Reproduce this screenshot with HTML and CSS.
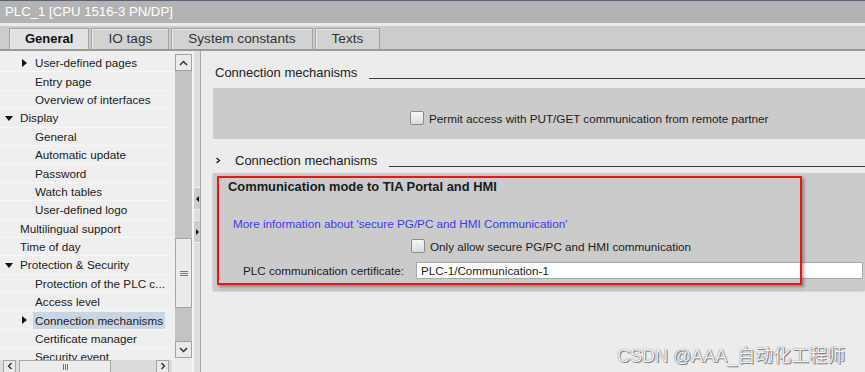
FILE: index.html
```html
<!DOCTYPE html>
<html lang="en">
<head>
    <meta charset="UTF-8">
    <meta name="viewport" content="width=device-width, initial-scale=1.0">
    <title>PLC_1 Properties</title>
    <link rel="stylesheet" href="styles.css">
</head>
<body>
    <div class="window">
        <div class="titlebar">PLC_1 [CPU 1516-3 PN/DP]</div>

        <div class="tabbar">
            <div class="tab active">General</div>
            <div class="tab">IO tags</div>
            <div class="tab">System constants</div>
            <div class="tab">Texts</div>
        </div>

        <div class="main">
            <div class="tree-col">
                <ul class="tree">
                    <li class="row l2"><span class="twisty closed"></span><span class="label">User-defined pages</span></li>
                    <li class="row l2"><span class="label">Entry page</span></li>
                    <li class="row l2"><span class="label">Overview of interfaces</span></li>
                    <li class="row l1"><span class="twisty open"></span><span class="label">Display</span></li>
                    <li class="row l2"><span class="label">General</span></li>
                    <li class="row l2"><span class="label">Automatic update</span></li>
                    <li class="row l2"><span class="label">Password</span></li>
                    <li class="row l2"><span class="label">Watch tables</span></li>
                    <li class="row l2"><span class="label">User-defined logo</span></li>
                    <li class="row l1"><span class="label">Multilingual support</span></li>
                    <li class="row l1"><span class="label">Time of day</span></li>
                    <li class="row l1"><span class="twisty open"></span><span class="label">Protection &amp; Security</span></li>
                    <li class="row l2"><span class="label">Protection of the PLC c...</span></li>
                    <li class="row l2"><span class="label">Access level</span></li>
                    <li class="row l2 selected"><span class="twisty closed"></span><span class="label">Connection mechanisms</span></li>
                    <li class="row l2"><span class="label">Certificate manager</span></li>
                    <li class="row l2"><span class="label">Security event</span></li>
                </ul>
                <div class="hscroll">
                    <div class="sbtn">
                        <svg width="8" height="8" viewBox="0 0 8 8"><polyline points="5.5,1 2.5,4 5.5,7" fill="none" stroke="#333" stroke-width="1.4"/></svg>
                    </div>
                    <div class="hthumb"><span class="grip-v"></span></div>
                    <div class="hspace"></div>
                    <div class="sbtn">
                        <svg width="8" height="8" viewBox="0 0 8 8"><polyline points="2.5,1 5.5,4 2.5,7" fill="none" stroke="#333" stroke-width="1.4"/></svg>
                    </div>
                </div>
            </div>

            <div class="vscroll">
                <div class="sbtn">
                    <svg width="9" height="8" viewBox="0 0 9 8"><polyline points="1,6 4.5,2.5 8,6" fill="none" stroke="#333" stroke-width="1.5"/></svg>
                </div>
                <div class="track-top"></div>
                <div class="vthumb"><span class="grip-h"></span></div>
                <div class="track-bottom"></div>
                <div class="sbtn">
                    <svg width="9" height="8" viewBox="0 0 9 8"><polyline points="1,2 4.5,5.5 8,2" fill="none" stroke="#333" stroke-width="1.5"/></svg>
                </div>
            </div>

            <div class="splitter">
                <div class="split-btn"><span class="arrow-left"></span></div>
                <div class="split-btn"><span class="arrow-right"></span></div>
            </div>

            <div class="content">
                <div class="section-head">
                    <span>Connection mechanisms</span>
                    <span class="rule"></span>
                </div>
                <div class="panel panel-put">
                    <label class="check-row">
                        <span class="checkbox"></span>
                        <span>Permit access with PUT/GET communication from remote partner</span>
                    </label>
                </div>

                <div class="section-head sub">
                    <span class="chev">
                        <svg width="6" height="7" viewBox="0 0 6 7"><polyline points="1.5,1 4.5,3.5 1.5,6" fill="none" stroke="#222" stroke-width="1.4"/></svg>
                    </span>
                    <span>Connection mechanisms</span>
                    <span class="rule"></span>
                </div>
                <div class="panel panel-mode">
                    <div class="panel-title">Communication mode to TIA Portal and HMI</div>
                    <div class="info-link">More information about 'secure PG/PC and HMI Communication'</div>
                    <label class="check-row secure">
                        <span class="checkbox"></span>
                        <span>Only allow secure PG/PC and HMI communication</span>
                    </label>
                    <div class="cert-row">
                        <span class="cert-label">PLC communication certificate:</span>
                        <div class="cert-field">PLC-1/Communication-1</div>
                    </div>
                    <div class="highlight"></div>
                </div>
            </div>
        </div>

        <div class="watermark">CSDN @AAA_自动化工程师</div>
    </div>
</body>
</html>
```

FILE: styles.css
```css
:root {
    --panel: #cbcbcb;
    --content: #ececec;
    --text: #1c1c1c;
    --border: #9c9c9c;
}

* {
    box-sizing: border-box;
}

body {
    margin: 0;
    font-family: "Liberation Sans", Arial, sans-serif;
    font-size: 11.7px;
    color: var(--text);
    background-color: var(--content);
}

.window {
    position: relative;
    width: 865px;
    height: 372px;
    overflow: hidden;
    display: flex;
    flex-direction: column;
}

.titlebar {
    height: 23px;
    border-top: 1px solid #5b6171;
    background-color: #b3b3b3;
    color: #ffffff;
    font-size: 13.2px;
    line-height: 21px;
    padding-left: 5px;
}

.tabbar {
    height: 28px;
    border-top: 3px solid #ebebeb;
    border-bottom: 2px solid #999999;
    background-color: #cccccc;
    display: flex;
    gap: 2px;
    padding: 2px 0 0 9px;
}

.tab {
    height: 21px;
    padding: 0 16px;
    border: 1px solid #a2a2a2;
    border-bottom: none;
    box-shadow: inset 1px 1px 0 #e8e8e8;
    background-color: #d2d2d2;
    font-size: 13.6px;
    line-height: 20px;
    color: #333333;
    text-align: center;
}

.tab.active {
    background-color: #e2e2e2;
    font-weight: bold;
    font-size: 13px;
    color: #111111;
    padding: 0 15px;
}

.main {
    flex: 1;
    display: flex;
    min-height: 0;
}

/* left navigation tree */
.tree-col {
    width: 175px;
    display: flex;
    flex-direction: column;
    background-color: #efefef;
}

.tree {
    flex: 1;
    list-style: none;
    margin: 0;
    padding: 3px 0 0 0;
    overflow: hidden;
}

.row {
    height: 18.4px;
    display: flex;
    align-items: center;
    border-bottom: 1px solid #f7f7f7;
    white-space: nowrap;
    margin-right: 3px;
}

.row.l1 {
    padding-left: 20px;
}

.row.l2 {
    padding-left: 35px;
}

.label {
    height: 17px;
    line-height: 17px;
    padding: 0 2px;
    margin-left: -2px;
}

.row.selected .label {
    background-color: #c9d5e1;
}

.twisty {
    width: 0;
    height: 0;
    margin-left: -13px;
    margin-right: 13px;
    position: relative;
}

.twisty.closed::before,
.twisty.open::before {
    content: "";
    position: absolute;
    top: -4px;
}

.twisty.closed::before {
    left: 0;
    border-top: 4px solid transparent;
    border-bottom: 4px solid transparent;
    border-left: 5px solid #111111;
}

.row.l1 .twisty {
    margin-left: -15px;
    margin-right: 15px;
}

.twisty.open::before {
    left: 0;
    top: -2px;
    border-left: 4px solid transparent;
    border-right: 4px solid transparent;
    border-top: 5px solid #111111;
}

.hscroll {
    height: 12px;
    display: flex;
    gap: 3px;
    padding: 0 3px;
    margin-right: 3px;
    background-color: #dcdcdc;
}

.sbtn {
    width: 15px;
    height: 17px;
    border: 1px solid #a3a3a3;
    background-color: #eaeaea;
    display: flex;
    align-items: center;
    justify-content: center;
}

.hscroll .sbtn {
    width: 13px;
    height: 14px;
    padding-bottom: 2px;
}

.hthumb {
    width: 92px;
    height: 14px;
    border: 1px solid #a6a6a6;
    background-color: #ececec;
    display: flex;
    justify-content: center;
    padding-top: 3px;
}

.hspace {
    flex: 1;
}

.grip-v {
    width: 5px;
    height: 6px;
    border-left: 1px solid #777;
    border-right: 1px solid #777;
    position: relative;
}

.grip-v::after {
    content: "";
    position: absolute;
    left: 1px;
    top: 0;
    width: 1px;
    height: 6px;
    background-color: #777;
}

.vscroll {
    width: 17px;
    margin: 3px 0 14px 0;
    display: flex;
    flex-direction: column;
    background-color: #c3c3c3;
}

.vscroll .sbtn {
    width: 17px;
}

.track-top {
    height: 167px;
}

.vthumb {
    height: 70px;
    border: 1px solid #a6a6a6;
    background-color: #ebebeb;
    display: flex;
    align-items: center;
    justify-content: center;
}

.track-bottom {
    flex: 1;
}

.grip-h {
    width: 8px;
    height: 5px;
    border-top: 1px solid #777;
    border-bottom: 1px solid #777;
    position: relative;
}

.grip-h::after {
    content: "";
    position: absolute;
    left: 0;
    top: 1px;
    width: 8px;
    height: 1px;
    background-color: #777;
}

/* splitter between tree and editor */
.splitter {
    width: 9px;
    border-left: 2px solid #f4f4f4;
    border-right: 1px solid #a9a9a9;
    background-color: #dedede;
    display: flex;
    flex-direction: column;
    gap: 10px;
    padding-top: 136px;
}

.split-btn {
    height: 23px;
    background-color: #cdcdcd;
    border-top: 1px solid #f2f2f2;
    border-bottom: 1px solid #f2f2f2;
    display: flex;
    align-items: center;
    justify-content: center;
}

.arrow-left {
    border-top: 3px solid transparent;
    border-bottom: 3px solid transparent;
    border-right: 3px solid #111;
}

.arrow-right {
    border-top: 3px solid transparent;
    border-bottom: 3px solid transparent;
    border-left: 3px solid #111;
}

/* editor area */
.content {
    flex: 1;
    padding: 12px 0 0 12px;
    display: flex;
    flex-direction: column;
    background-color: var(--content);
    min-width: 0;
}

.section-head {
    height: 18px;
    display: flex;
    align-items: center;
    padding-left: 2px;
    font-size: 13px;
    color: #222;
    white-space: nowrap;
}

.section-head.sub {
    margin-top: 12px;
}

.chev {
    width: 20px;
    display: flex;
    align-items: center;
}

.rule {
    flex: 1;
    height: 1px;
    background-color: #3a3a3a;
    margin: 12px 0 0 12px;
}

.panel {
    background-color: var(--panel);
}

.panel-put {
    height: 51px;
    margin-top: 7px;
    padding: 23px 0 0 197px;
}

.check-row {
    height: 14px;
    display: flex;
    align-items: center;
    gap: 5px;
    white-space: nowrap;
}

.checkbox {
    width: 14px;
    height: 14px;
    border: 1px solid #8c8c8c;
    border-radius: 2px;
    background: linear-gradient(#f6f6f6, #dcdcdc);
}

.panel-mode {
    position: relative;
    height: 117px;
    margin-top: 4px;
    padding-top: 7px;
    box-shadow: 0 1px 2px rgba(0, 0, 0, 0.25);
}

.panel-title {
    height: 14px;
    line-height: 14px;
    padding-left: 15px;
    font-size: 12.9px;
    font-weight: bold;
    color: #1a1a1a;
}

.info-link {
    margin-top: 23px;
    height: 14px;
    line-height: 14px;
    padding-left: 20px;
    color: #3a3af0;
}

.check-row.secure {
    margin-top: 8px;
    padding-left: 198px;
}

.cert-row {
    margin-top: 9px;
    display: flex;
    align-items: center;
    padding: 0 2px 0 30px;
}

.cert-label {
    width: 173px;
    white-space: nowrap;
}

.cert-field {
    flex: 1;
    height: 17px;
    line-height: 15px;
    padding-left: 4px;
    border: 1px solid #a8a8a8;
    background-color: #ffffff;
}

/* red annotation frame drawn over the screenshot */
.highlight {
    position: absolute;
    left: 4px;
    top: 3px;
    width: 585px;
    height: 109px;
    border: 2px solid #ec1515;
    box-shadow: 2px 2px 3px rgba(0, 0, 0, 0.35);
    pointer-events: none;
}

.watermark {
    position: absolute;
    left: 617px;
    top: 341px;
    font-family: "Liberation Sans", "Noto Sans CJK SC", sans-serif;
    font-size: 18px;
    color: #f2f2f2;
    text-shadow: 0 0 1px #555, 1px 1px 0 #8a8a8a;
    white-space: nowrap;
}
```
